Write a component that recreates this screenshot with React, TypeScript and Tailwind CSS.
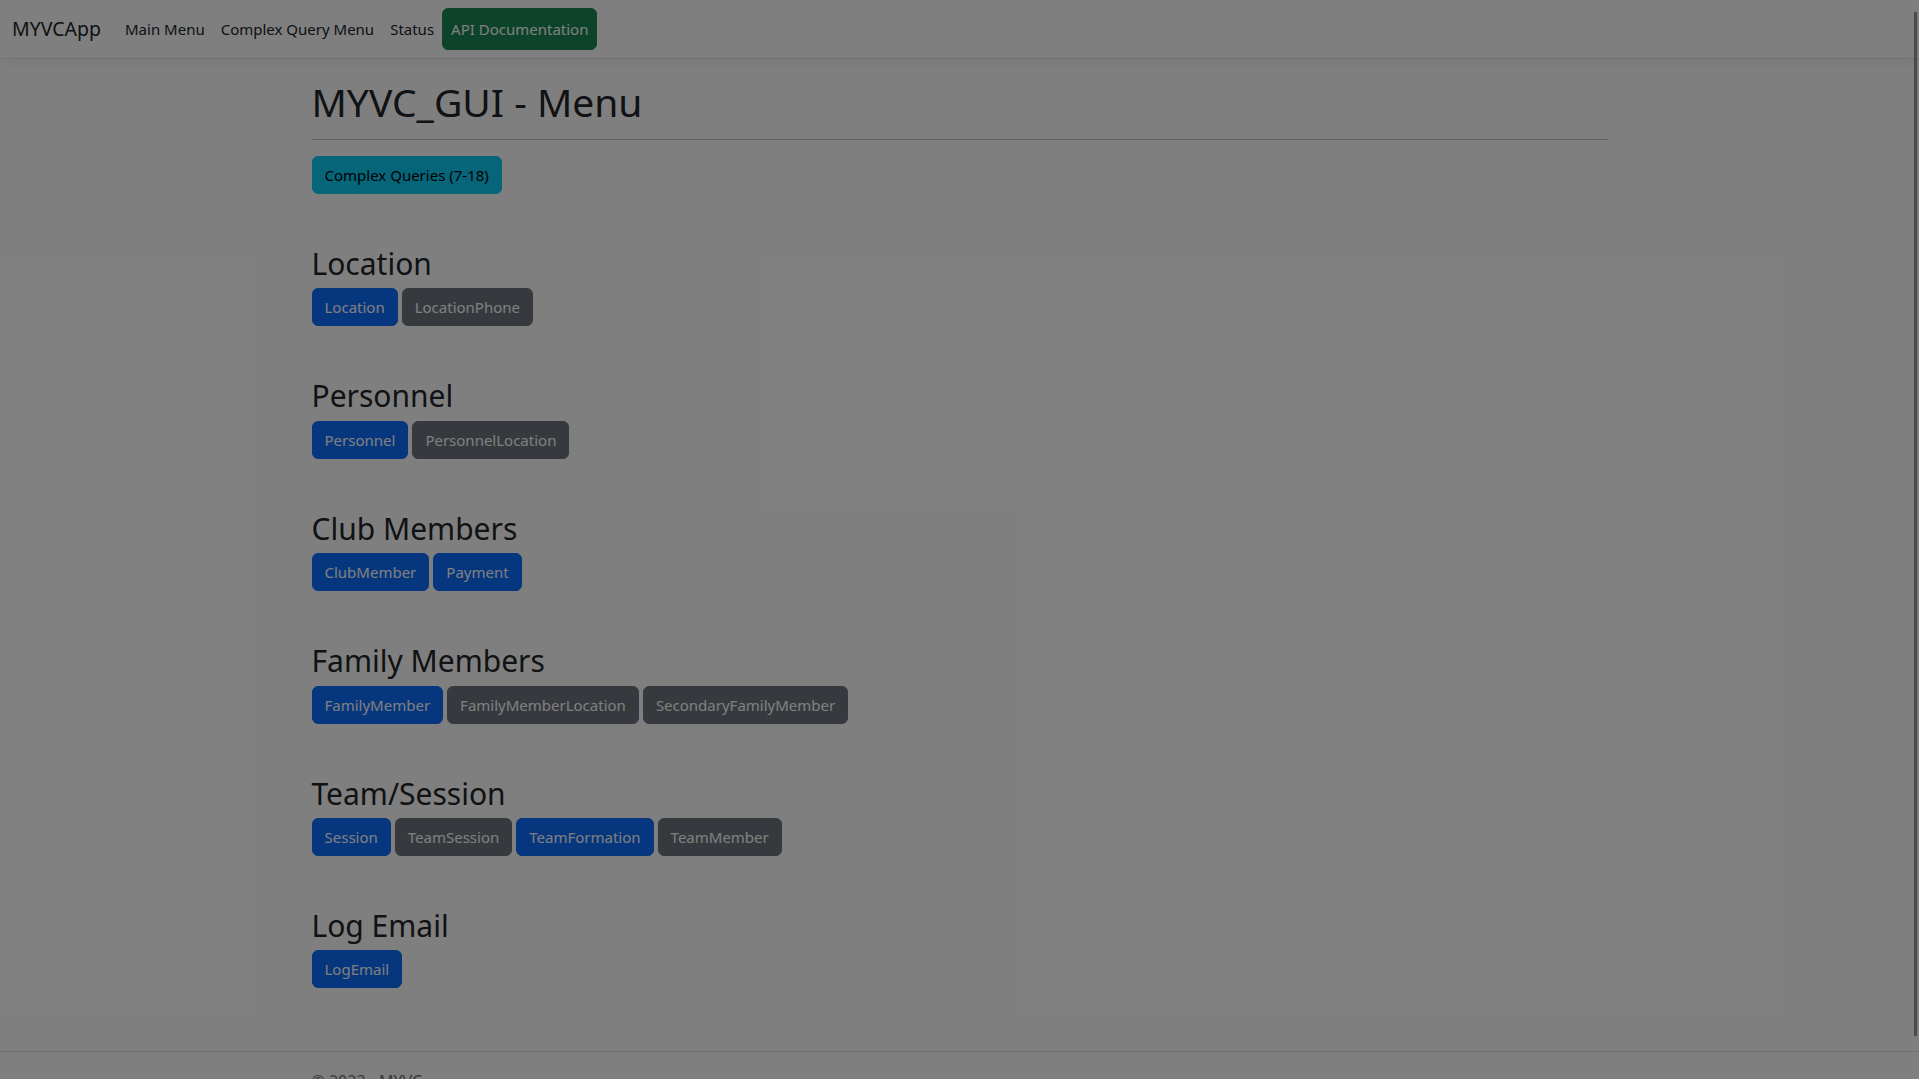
type Variant = "primary" | "secondary";

const sections: { title: string; buttons: [string, Variant][] }[] = [
  { title: "Location", buttons: [["Location", "primary"], ["LocationPhone", "secondary"]] },
  { title: "Personnel", buttons: [["Personnel", "primary"], ["PersonnelLocation", "secondary"]] },
  { title: "Club Members", buttons: [["ClubMember", "primary"], ["Payment", "primary"]] },
  {
    title: "Family Members",
    buttons: [
      ["FamilyMember", "primary"],
      ["FamilyMemberLocation", "secondary"],
      ["SecondaryFamilyMember", "secondary"],
    ],
  },
  {
    title: "Team/Session",
    buttons: [
      ["Session", "primary"],
      ["TeamSession", "secondary"],
      ["TeamFormation", "primary"],
      ["TeamMember", "secondary"],
    ],
  },
  { title: "Log Email", buttons: [["LogEmail", "primary"]] },
];

function Btn({ label, variant }: { label: string; variant: Variant }) {
  const color =
    variant === "primary"
      ? "bg-[#0d6efd] border-[#0d6efd] text-white"
      : "bg-[#6c757d] border-[#6c757d] text-white";
  return (
    <a className={`inline-block rounded-[6px] border px-3 py-[6px] text-[15px] leading-6 ${color}`}>
      {label}
    </a>
  );
}

export default function App() {
  return (
    <div className="relative h-[1079px] overflow-hidden bg-white font-['Noto_Sans',sans-serif] text-[#212529]">
      <div className="flex min-h-[1112px] flex-col">
        {/* Navbar */}
        <nav className="mb-4 flex items-center border-b border-[#dee2e6] bg-white px-3 py-2 shadow-[0_4px_12px_rgba(0,0,0,0.05)]">
          <a className="mr-4 py-[5px] text-[19.5px] leading-[30px] text-[#212529]">MYVCApp</a>
          <div className="flex items-center text-[15px]">
            <a className="px-2 py-2 leading-6 text-[#212529]">Main Menu</a>
            <a className="px-2 py-2 leading-6 text-[#212529]">Complex Query Menu</a>
            <a className="px-2 py-2 leading-6 text-[#212529]">Status</a>
            <a className="rounded-[6px] border border-[#198754] bg-[#198754] px-2 py-2 leading-6 text-white">
              API Documentation
            </a>
          </div>
        </nav>

        {/* Main */}
        <main className="flex-1">
          <div className="mx-auto w-[1320px] px-3">
            <h1 className="pt-[5px] text-[39px] leading-[43px] font-normal">MYVC_GUI - Menu</h1>
            <hr className="my-4 border-t border-[#212529] opacity-25" />
            <a className="inline-block rounded-[6px] border border-[#0dcaf0] bg-[#0dcaf0] px-3 py-[6px] text-[15px] leading-6 text-black">
              Complex Queries (7-18)
            </a>

            {sections.map((s) => (
              <section key={s.title} className="mt-12">
                <h2 className="mb-2 pt-[5px] text-[30px] leading-[33.4px] font-normal">{s.title}</h2>
                <div className="flex gap-1">
                  {s.buttons.map(([label, variant]) => (
                    <Btn key={label} label={label} variant={variant} />
                  ))}
                </div>
              </section>
            ))}
          </div>
        </main>

        {/* Footer */}
        <footer className="h-[61px] border-t border-[#dee2e6] whitespace-nowrap text-[#6c757d]">
          <div className="mx-auto w-[1320px] px-3 text-base leading-[58px]">&copy; 2023 - MYVC</div>
        </footer>
      </div>

      {/* modal backdrop */}
      <div className="absolute inset-0 bg-black/50" />
      {/* scrollbar thumb */}
      <div className="absolute top-[12px] right-[2px] h-[1024px] w-[3px] bg-[#4a4a4a]" />
    </div>
  );
}
